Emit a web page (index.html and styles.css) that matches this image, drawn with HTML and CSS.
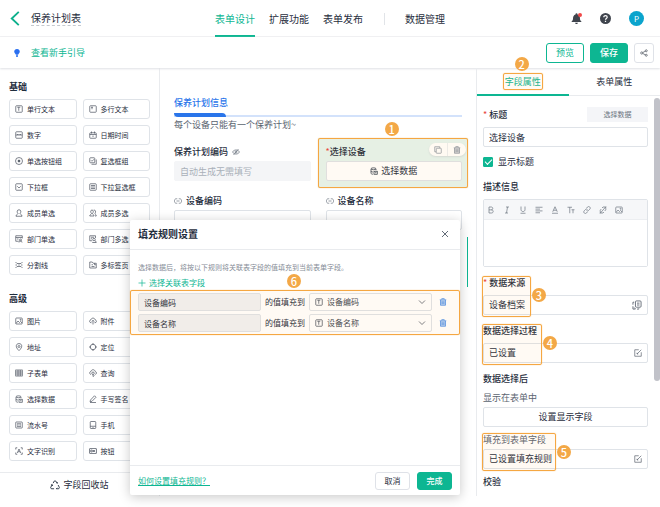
FILE: index.html
```html
<!doctype html>
<html lang="zh-CN">
<head>
<meta charset="utf-8">
<meta name="viewport" content="width=device-width, initial-scale=1">
<title>保养计划表</title>
<link rel="stylesheet" href="styles.css">
</head>
<body>
	<!-- 图标 -->
	<svg class="defs" width="0" height="0">
		<symbol id="i-text" viewBox="0 0 16 16"><rect x="1.5" y="1.5" width="13" height="13" rx="1.5"/><path d="M4.5 4.5h6M7.500 4.500v7"/></symbol>
		<symbol id="i-area" viewBox="0 0 16 16"><rect x="1.5" y="1.5" width="13" height="13" rx="1.5"/><path d="M4 4.500h4M6 4.500v4"/></symbol>
		<symbol id="i-num" viewBox="0 0 16 16"><rect x="1.5" y="1.5" width="13" height="13" rx="1.5"/><path d="M1.500 8h13M5 8v-2M8 8v-2M11 8v-2"/></symbol>
		<symbol id="i-date" viewBox="0 0 16 16"><rect x="1.5" y="3.500" width="13" height="11" rx="1.5"/><path d="M1.500 7h13M5 1v4M11 1v4M8 9v3"/></symbol>
		<symbol id="i-radio" viewBox="0 0 16 16"><circle cx="8" cy="8" r="7"/><circle cx="8" cy="8" r="2" fill="currentColor"/></symbol>
		<symbol id="i-check" viewBox="0 0 16 16"><rect x="1.500" y="1.500" width="10" height="10" rx="1.500"/><path d="M14.500 5v9.500h-9.500M4 6.500l2 2 4-4"/></symbol>
		<symbol id="i-down" viewBox="0 0 16 16"><rect x="1.5" y="1.5" width="13" height="13" rx="1.5"/><path d="M4.500 6.500l3.500 3.500 3.500-3.500"/></symbol>
		<symbol id="i-list" viewBox="0 0 16 16"><rect x="1.5" y="1.5" width="13" height="13" rx="1.5"/><path d="M4 5h8M4 8h8M4 11h8"/></symbol>
		<symbol id="i-user" viewBox="0 0 16 16"><path d="M6 9c-3-3-2-7.500 2-7.500s5 4.500 2 7.500c0 2 4 1 4 5.500h-12c0-4.500 4-3.500 4-5.500z"/></symbol>
		<symbol id="i-users" viewBox="0 0 16 16"><path d="M5 9c-2.500-3-2-7 1-7s3.500 4 1 7c0 2 3 1.500 3 5h-8.500c0-3.500 3.500-3 3.500-5zM9.500 2c4-.5 4.500 4 2.500 7 0 2 2.500 1.500 2.500 5h-2.500"/></symbol>
		<symbol id="i-dept" viewBox="0 0 16 16"><path d="M14.500 7v-5.500h-13v11h6M1.500 5h13M4 8h3"/><circle cx="11" cy="10" r="2"/><path d="M8 15c0-4 6-4 6 0"/></symbol>
		<symbol id="i-depts" viewBox="0 0 16 16"><path d="M13 6v-4.500h-11.500v10h5M4 4.500h6M4 7.500h2"/><circle cx="10" cy="9" r="2.500"/><path d="M6.500 15h8c0-2-1-3-2.500-3.500"/></symbol>
		<symbol id="i-split" viewBox="0 0 16 16"><path d="M1 2l3 3h8l3-3M1 14l3-3h8l3 3M1 8h3M6.500 8h3M12 8h3"/></symbol>
		<symbol id="i-tabs" viewBox="0 0 16 16"><path d="M1.500 2h5l2 2.500h6v9.500h-13zM5 7.500h3M5 11h6M11 4.500v3h3"/></symbol>
		<symbol id="i-img" viewBox="0 0 16 16"><rect x="1.500" y="2" width="13" height="12" rx="1.500"/><path d="M2 13l4-5 3 3 2-2 3 3"/><circle cx="11" cy="5.500" r="1"/></symbol>
		<symbol id="i-up" viewBox="0 0 16 16"><path d="M5 11.500h-1c-4-.5-3.500-5.500-.5-5.500 1-5 8-5 9 0 3.500.5 3 5.500-.5 5.500h-1M8 15v-8M5.500 9l2.500-2.500 2.500 2.500"/></symbol>
		<symbol id="i-pin" viewBox="0 0 16 16"><path d="M8 15.200c-8-7-6.500-14 0-14s8 7 0 14z"/><circle cx="8" cy="7" r="2"/></symbol>
		<symbol id="i-locate" viewBox="0 0 16 16"><circle cx="8" cy="8" r="5.500"/><path d="M8 0v4M8 12v4M0 8h4M12 8h4"/></symbol>
		<symbol id="i-sub" viewBox="0 0 16 16"><rect x="1.500" y="2" width="13" height="12"/><path d="M6 2v12M10.500 2v12M1.500 6h13M1.500 10h13"/></symbol>
		<symbol id="i-find" viewBox="0 0 16 16"><path d="M4 11c-4-1-3-6 0-6 1-5 7.500-4.500 8.500 0 3.500 1 3 5 0 6"/><circle cx="8" cy="8.500" r="2.500"/><path d="M8 11v4M8 15l3-2"/></symbol>
		<symbol id="i-data" viewBox="0 0 16 16"><path d="M2 3.500c0-2.500 10-2.500 10 0s-10 2.500-10 0v9c0 1 2 2 4 2M12 3.500v3M2 8c0 1 2 2 4 2"/><rect x="8" y="8.500" width="6.500" height="6"/><path d="M10 11.500h3"/></symbol>
		<symbol id="i-pen" viewBox="0 0 16 16"><path d="M3 10l8-8.500 3 3-8 8-4 1zM2 15h12"/></symbol>
		<symbol id="i-serial" viewBox="0 0 16 16"><rect x="1.500" y="2" width="13" height="12" rx="1"/><path d="M4 5.500h8M4 8h3M9 8h3M4 10.800h8"/></symbol>
		<symbol id="i-phone" viewBox="0 0 16 16"><rect x="2.500" y="1" width="11" height="14" rx="1.500"/><path d="M2.500 10.500h11M7 13h2"/></symbol>
		<symbol id="i-ocr" viewBox="0 0 16 16"><path d="M1.500 5v-3.500h3M11.500 1.500h3v3.500M14.500 11v3.500h-3M4.500 14.500h-3v-3.500M4.500 12l3.500-8 3.500 8M6 9.500h4"/></symbol>
		<symbol id="i-btn" viewBox="0 0 16 16"><rect x="1" y="3" width="14" height="10" rx="1"/><path d="M3.500 6h3v4h-3zM9 6v4M12.500 6l-3 2 3 2"/></symbol>
		<symbol id="i-recycle" viewBox="0 0 16 16"><path d="M5 5l2-3.500h2l2.500 4M13 8l2 4-1 2h-4M6.500 14h-4.500l-1-2 2.500-4.500M3.500 7.500l-2 .5M3.500 7.500l.8 2M10 14l1.500-1.500M11.500 5.500l.5-2"/></symbol>
		<symbol id="i-bell" viewBox="0 0 16 16"><path fill="currentColor" stroke="none" d="M8 .5c1 0 1.500.5 1.500 1.500 2.500.7 3.500 3 3.500 5 0 3 .5 4 2 5v1h-14v-1c1.500-1 2-2 2-5 0-2 1-4.300 3.500-5 0-1 .5-1.500 1.500-1.500zM6 14h4c0 2.500-4 2.500-4 0z"/></symbol>
		<symbol id="i-help" viewBox="0 0 16 16"><circle cx="8" cy="8" r="8" fill="currentColor" stroke="none"/><path stroke="#fff" stroke-width="1.800" d="M5.500 6.300c0-3.300 5-3.200 5 0 0 1.700-2.500 1.700-2.500 3.600M8 11.300v1.700"/></symbol>
		<symbol id="i-share" viewBox="0 0 16 16"><circle cx="3.500" cy="8" r="2.200"/><circle cx="12.500" cy="3.500" r="2"/><circle cx="12.500" cy="12.500" r="2"/><path d="M5.500 7l5-2.500M5.500 9l5 2.500"/></symbol>
		<symbol id="i-bulb" viewBox="0 0 16 16"><path fill="currentColor" stroke="none" d="M8 0c4 0 6 3 5.500 6-.4 2.500-2.700 3.500-3.200 5.500h-4.600c-.5-2-2.800-3-3.200-5.500-.5-3 1.500-6 5.500-6zM6 12.500h4v2l-1 1.500h-2l-1-1.500z"/></symbol>
		<symbol id="i-back" viewBox="0 0 16 16"><path d="M11.500 1l-7.500 7 7.500 7"/></symbol>
		<symbol id="i-hide" viewBox="0 0 16 16"><path d="M1 8c3-5.500 11-5.500 14 0-3 5.500-11 5.500-14 0zM13 2l-10 12"/><circle cx="8" cy="8" r="2"/></symbol>
		<symbol id="i-link" viewBox="0 0 16 16"><path d="M6.500 12.500h-2c-5 0-5-9 0-9h2M9.500 3.500h2c5 0 5 9 0 9h-2M5 8h6"/></symbol>
		<symbol id="i-copy" viewBox="0 0 16 16"><rect x="4.500" y="4.500" width="10" height="10" rx="1"/><path d="M11.500 4v-2.500h-10v10h2.500"/></symbol>
		<symbol id="i-trash" viewBox="0 0 16 16"><path d="M1.500 3.500h13M5.500 3v-1.800h5v1.800"/><path fill="currentColor" fill-opacity=".4" d="M3 4v10.500h10v-10.500"/><path d="M6.300 6.500v5.500M9.700 6.500v5.500"/></symbol>
		<symbol id="i-close" viewBox="0 0 16 16"><path d="M2 2l12 12M14 2l-12 12"/></symbol>
		<symbol id="i-plus" viewBox="0 0 16 16"><path d="M8 1v14M1 8h14"/></symbol>
		<symbol id="i-chev" viewBox="0 0 16 16"><path d="M2 5l6 6 6-6"/></symbol>
		<symbol id="i-edit" viewBox="0 0 16 16"><path d="M9.500 1.500h-8v13h13v-8M6 10l8.500-8.500M6 7.500v2.500h2.500"/></symbol>
		<symbol id="i-switch" viewBox="0 0 16 16"><rect x="5.500" y="1.500" width="9" height="10" rx="1.500"/><path d="M8 5h4M8 8h4M3.500 3.500h-2v4M1.500 10v4.500h4M8 14.500h3v-1M3.500 12l2 2.300"/></symbol>
		<symbol id="i-bold" viewBox="0 0 16 16"><path d="M4 2v12h5c4.500 0 4.500-6.300 0-6.300h-5M4 2h4.500c4 0 4 5.700 0 5.700"/></symbol>
		<symbol id="i-italic" viewBox="0 0 16 16"><path d="M6 2h6M4 14h6M9 2l-2 12"/></symbol>
		<symbol id="i-under" viewBox="0 0 16 16"><path d="M4 1v6c0 5.500 8 5.500 8 0v-6M3 14.500h10"/></symbol>
		<symbol id="i-align" viewBox="0 0 16 16"><path d="M1 2.500h14M1 6.200h9M1 9.800h14M1 13.500h9"/></symbol>
		<symbol id="i-color" viewBox="0 0 16 16"><path d="M3.500 11.500l4.500-10 4.500 10M5 8.500h6M2 14.500h12"/></symbol>
		<symbol id="i-size" viewBox="0 0 16 16"><path d="M1 2.500h9M5.500 2.500v12M9 7.500h6M12 7.500v7"/></symbol>
		<symbol id="i-chain" viewBox="0 0 16 16"><path d="M7 4.500l2-2.500c3-3 7.500 1.500 4.500 4.500l-2.500 2.500c-1.500 1.300-3 1-4 0M9 11.500l-2 2.500c-3 3-7.500-1.500-4.500-4.500l2.500-2.500c1.500-1.300 3-1 4 0"/></symbol>
		<symbol id="i-unlink" viewBox="0 0 16 16"><path d="M6 4l2-2h5.500v5.500l-2 2.500M10 12l-2 2h-5.500v-5.500l2-2.500M14 1l-12 14"/></symbol>
	</svg>

	<div class="app">
		<header class="header">
			<div class="header-left">
				<button type="button" class="bare back" aria-label="返回"><svg class="icon icon-lg"><use href="#i-back"/></svg></button>
				<h1 class="form-name">保养计划表</h1>
			</div>
			<nav class="nav">
				<a href="#" class="active">表单设计</a>
				<a href="#">扩展功能</a>
				<a href="#">表单发布</a>
				<a href="#" class="nav-data">数据管理</a>
			</nav>
			<div class="header-right">
				<button type="button" class="bare bell" aria-label="消息"><svg class="icon icon-md"><use href="#i-bell"/></svg></button>
				<button type="button" class="bare" aria-label="帮助"><svg class="icon icon-md"><use href="#i-help"/></svg></button>
				<span class="avatar">P</span>
			</div>
		</header>

		<div class="toolbar">
			<svg class="icon bulb"><use href="#i-bulb"/></svg>
			<a href="#" class="guide">查看新手引导</a>
			<button type="button" class="btn btn-line">预览</button>
			<button type="button" class="btn btn-main">保存</button>
			<button type="button" class="btn btn-share" aria-label="分享"><svg class="icon"><use href="#i-share"/></svg></button>
		</div>

		<main class="workspace">
			<aside class="sidebar">
				<h2>基础</h2>
				<div class="widgets">
					<button type="button"><svg class="icon"><use href="#i-text"/></svg>单行文本</button>
					<button type="button"><svg class="icon"><use href="#i-area"/></svg>多行文本</button>
					<button type="button"><svg class="icon"><use href="#i-num"/></svg>数字</button>
					<button type="button"><svg class="icon"><use href="#i-date"/></svg>日期时间</button>
					<button type="button"><svg class="icon"><use href="#i-radio"/></svg>单选按钮组</button>
					<button type="button"><svg class="icon"><use href="#i-check"/></svg>复选框组</button>
					<button type="button"><svg class="icon"><use href="#i-down"/></svg>下拉框</button>
					<button type="button"><svg class="icon"><use href="#i-list"/></svg>下拉复选框</button>
					<button type="button"><svg class="icon"><use href="#i-user"/></svg>成员单选</button>
					<button type="button"><svg class="icon"><use href="#i-users"/></svg>成员多选</button>
					<button type="button"><svg class="icon"><use href="#i-dept"/></svg>部门单选</button>
					<button type="button"><svg class="icon"><use href="#i-depts"/></svg>部门多选</button>
					<button type="button"><svg class="icon"><use href="#i-split"/></svg>分割线</button>
					<button type="button"><svg class="icon"><use href="#i-tabs"/></svg>多标签页</button>
				</div>
				<h2>高级</h2>
				<div class="widgets">
					<button type="button"><svg class="icon"><use href="#i-img"/></svg>图片</button>
					<button type="button"><svg class="icon"><use href="#i-up"/></svg>附件</button>
					<button type="button"><svg class="icon"><use href="#i-pin"/></svg>地址</button>
					<button type="button"><svg class="icon"><use href="#i-locate"/></svg>定位</button>
					<button type="button"><svg class="icon"><use href="#i-sub"/></svg>子表单</button>
					<button type="button"><svg class="icon"><use href="#i-find"/></svg>查询</button>
					<button type="button"><svg class="icon"><use href="#i-data"/></svg>选择数据</button>
					<button type="button"><svg class="icon"><use href="#i-pen"/></svg>手写签名</button>
					<button type="button"><svg class="icon"><use href="#i-serial"/></svg>流水号</button>
					<button type="button"><svg class="icon"><use href="#i-phone"/></svg>手机</button>
					<button type="button"><svg class="icon"><use href="#i-ocr"/></svg>文字识别</button>
					<button type="button"><svg class="icon"><use href="#i-btn"/></svg>按钮</button>
				</div>
				<button type="button" class="recycle"><svg class="icon icon-md"><use href="#i-recycle"/></svg>字段回收站</button>
			</aside>

			<section class="canvas">
				<h3 class="part-title">保养计划信息</h3>
				<div class="part-line"></div>
				<p class="part-desc">每个设备只能有一个保养计划~</p>
				<div class="fields">
					<div class="field">
						<label for="code">保养计划编码 <svg class="icon"><use href="#i-hide"/></svg></label>
						<input type="text" id="code" class="box off" placeholder="自动生成无需填写" disabled>
					</div>
					<div class="field picked">
						<span class="field-name"><i class="star">*</i>选择设备</span>
						<button type="button" class="box pick"><svg class="icon"><use href="#i-data"/></svg>选择数据</button>
						<div class="mark mark-field"><b class="dot dot-top">1</b></div>
						<div class="tools">
							<button type="button" class="bare" aria-label="复制"><svg class="icon"><use href="#i-copy"/></svg></button>
							<button type="button" class="bare" aria-label="删除"><svg class="icon"><use href="#i-trash"/></svg></button>
						</div>
					</div>
					<div class="field">
						<label for="dev-code"><svg class="icon"><use href="#i-link"/></svg> 设备编码</label>
						<input type="text" id="dev-code" class="box">
					</div>
					<div class="field">
						<label for="dev-name"><svg class="icon"><use href="#i-link"/></svg> 设备名称</label>
						<input type="text" id="dev-name" class="box">
					</div>
				</div>
				<div class="drop-line"></div>
			</section>

			<aside class="props">
				<div class="tabs">
					<button type="button" class="active"><span class="tab-name">字段属性<span class="mark mark-tab"><b class="dot dot-top">2</b></span></span></button>
					<button type="button">表单属性</button>
				</div>
				<div class="props-body">
					<div class="title-row">
						<label for="title"><i class="star">*</i> 标题</label>
						<span class="type">选择数据</span>
					</div>
					<input type="text" id="title" class="box" value="选择设备">
					<label class="check"><input type="checkbox" checked>显示标题</label>

					<div class="group">
						<h4>描述信息</h4>
						<div class="editor">
							<div class="editor-bar">
								<button type="button" class="bare" aria-label="加粗"><svg class="icon"><use href="#i-bold"/></svg></button>
								<button type="button" class="bare" aria-label="斜体"><svg class="icon"><use href="#i-italic"/></svg></button>
								<button type="button" class="bare" aria-label="下划线"><svg class="icon"><use href="#i-under"/></svg></button>
								<button type="button" class="bare" aria-label="对齐"><svg class="icon"><use href="#i-align"/></svg></button>
								<button type="button" class="bare" aria-label="颜色"><svg class="icon"><use href="#i-color"/></svg></button>
								<button type="button" class="bare" aria-label="字号"><svg class="icon"><use href="#i-size"/></svg></button>
								<button type="button" class="bare" aria-label="链接"><svg class="icon"><use href="#i-chain"/></svg></button>
								<button type="button" class="bare" aria-label="取消链接"><svg class="icon"><use href="#i-unlink"/></svg></button>
								<button type="button" class="bare" aria-label="插入图片"><svg class="icon"><use href="#i-img"/></svg></button>
							</div>
							<textarea aria-label="描述信息"></textarea>
						</div>
					</div>

					<div class="group">
						<h4><i class="star">*</i> 数据来源</h4>
						<button type="button" class="box setting">设备档案<svg class="icon icon-md"><use href="#i-switch"/></svg></button>
						<div class="mark mark-source"><b class="dot dot-side">3</b></div>
					</div>

					<div class="group">
						<h4>数据选择过程</h4>
						<button type="button" class="box setting">已设置<svg class="icon"><use href="#i-edit"/></svg></button>
						<div class="mark mark-process"><b class="dot dot-side">4</b></div>
					</div>

					<div class="group">
						<h4>数据选择后</h4>
						<p class="sub">显示在表单中</p>
						<button type="button" class="box">设置显示字段</button>
					</div>
					<div class="group tight">
						<p class="sub">填充到表单字段</p>
						<button type="button" class="box setting">已设置填充规则<svg class="icon"><use href="#i-edit"/></svg></button>
						<div class="mark mark-fill"><b class="dot dot-side">5</b></div>
					</div>
					<div class="group tight">
						<h4>校验</h4>
					</div>
				</div>
				<div class="scroll"></div>
			</aside>
		</main>

		<div class="dialog" role="dialog" aria-labelledby="dialog-title">
			<div class="dialog-head">
				<h2 id="dialog-title">填充规则设置</h2>
				<button type="button" class="bare" aria-label="关闭"><svg class="icon"><use href="#i-close"/></svg></button>
			</div>
			<div class="dialog-body">
				<p class="hint">选择数据后，将按以下规则将关联表字段的值填充到当前表单字段。</p>
				<button type="button" class="bare add"><svg class="icon"><use href="#i-plus"/></svg>选择关联表字段</button>
				<div class="rules">
					<div class="rule">
						<input type="text" id="from1" value="设备编码" readonly>
						<label for="from1">的值填充到</label>
						<div class="select">
							<svg class="icon"><use href="#i-text"/></svg>
							<select aria-label="目标字段"><option>设备编码</option></select>
							<svg class="icon"><use href="#i-chev"/></svg>
						</div>
						<button type="button" class="bare del" aria-label="删除"><svg class="icon"><use href="#i-trash"/></svg></button>
					</div>
					<div class="rule">
						<input type="text" id="from2" value="设备名称" readonly>
						<label for="from2">的值填充到</label>
						<div class="select">
							<svg class="icon"><use href="#i-text"/></svg>
							<select aria-label="目标字段"><option>设备名称</option></select>
							<svg class="icon"><use href="#i-chev"/></svg>
						</div>
						<button type="button" class="bare del" aria-label="删除"><svg class="icon"><use href="#i-trash"/></svg></button>
					</div>
					<div class="mark mark-rules"><b class="dot dot-top">6</b></div>
				</div>
			</div>
			<div class="dialog-foot">
				<a href="#">如何设置填充规则？</a>
				<button type="button" class="btn">取消</button>
				<button type="button" class="btn btn-main">完成</button>
			</div>
		</div>
	</div>
</body>
</html>
```

FILE: styles.css
```css
* {
	box-sizing: border-box;
}
body {
	margin: 0;
	background: #fff;
	color: #1f2d3d;
	font: 9px/14px "Noto Sans CJK SC", sans-serif;
}
h1, h2, h3, h4, p {
	margin: 0;
	font-size: 9px;
}
p {
	font-weight: 400;
}
button, input, select, textarea {
	margin: 0;
	padding: 0;
	font: inherit;
	color: inherit;
	outline: none;
}
a {
	color: inherit;
	text-decoration: none;
}
.defs {
	position: absolute;
}
.icon {
	width: 8px;
	height: 8px;
	flex: none;
	fill: none;
	stroke: currentColor;
	stroke-width: 1.4;
}
.icon-md {
	width: 10px;
	height: 10px;
}
.icon-lg {
	width: 15px;
	height: 15px;
	stroke-width: 2;
}
.bare {
	display: flex;
	align-items: center;
	justify-content: center;
	border: none;
	background: none;
}
.star {
	color: #e8443a;
	font-style: normal;
	font-weight: 400;
}
.app {
	position: relative;
	display: flex;
	flex-direction: column;
	min-height: 100vh;
	padding-bottom: 11px;
}

/* 顶部 */
.header {
	display: grid;
	grid-template-columns: 1fr auto 1fr;
	height: 37px;
	border-bottom: 1px solid #f1f2f4;
	font-size: 10px;
}
.header-left {
	display: flex;
	align-items: center;
	gap: 8px;
	padding-left: 8px;
}
.back {
	color: #0db08c;
}
.form-name {
	font-size: 10px;
	font-weight: 400;
	border-bottom: 1px dashed #c5c9cf;
}
.nav {
	display: flex;
	gap: 14px;
	line-height: 37px;
}
.nav a {
	height: 37px;
}
.nav .active {
	color: #0db692;
	border-bottom: 2px solid #0db692;
}
.nav .nav-data {
	display: flex;
	align-items: center;
	margin-left: 7px;
}
.nav-data::before {
	content: "";
	width: 1px;
	height: 12px;
	margin-right: 20px;
	background: #e1e4e8;
}
.header-right {
	display: flex;
	align-items: center;
	justify-content: flex-end;
	gap: 18px;
	padding-right: 16px;
	color: #3f444d;
}
.header-right .icon {
	width: 11px;
	height: 11px;
}
.bell {
	position: relative;
}
.bell::after {
	content: "";
	position: absolute;
	top: 0;
	right: 0;
	width: 4px;
	height: 4px;
	border-radius: 50%;
	background: #f04848;
}
.avatar {
	width: 15px;
	height: 15px;
	border-radius: 50%;
	background: #0ba4cd;
	color: #fff;
	font-size: 8px;
	line-height: 15px;
	text-align: center;
}
.toolbar {
	position: relative;
	display: flex;
	align-items: center;
	gap: 6px;
	height: 31px;
	padding: 0 6px 0 13px;
	box-shadow: 0 1px 2px #dfe1e5;
}
.bulb {
	color: #2a6ff0;
}
.guide {
	flex: 1;
	margin-left: 4px;
	color: #0db692;
}
.btn {
	width: 38px;
	height: 20px;
	border: 1px solid #dfe2e8;
	border-radius: 3px;
	background: #fff;
}
.btn-line {
	border-color: #0db692;
	color: #0db692;
}
.btn-main {
	border-color: #0db692;
	background: #0db692;
	color: #fff;
	font-weight: 500;
}
.btn-share {
	display: flex;
	align-items: center;
	justify-content: center;
	width: 20px;
	color: #4a515c;
}
.workspace {
	display: grid;
	grid-template-columns: 160px 1fr 184px;
	flex: 1;
	border-radius: 0 0 4px 4px;
}

/* 左侧控件 */
.sidebar {
	display: flex;
	flex-direction: column;
	border-right: 1px solid #e9ebee;
}
.sidebar h2 {
	margin: 12px 9px 5px;
}
.sidebar .widgets + h2 {
	margin-top: 17px;
}
.widgets {
	display: grid;
	grid-template-columns: 1fr 1fr;
	gap: 6px;
	padding: 0 9px;
}
.widgets button {
	display: flex;
	align-items: center;
	gap: 4px;
	height: 20px;
	padding-left: 5px;
	border: 1px solid #dfe3e8;
	border-radius: 3px;
	background: #fff;
	font-size: 7px;
	white-space: nowrap;
}
.widgets .icon {
	color: #4a525e;
}
.recycle {
	display: flex;
	align-items: center;
	justify-content: center;
	gap: 3px;
	height: 24px;
	margin-top: auto;
	border: none;
	border-top: 1px solid #e9ebee;
	background: none;
}

/* 中间画布 */
.canvas {
	position: relative;
	padding: 28px 14px 0;
}
.part-title {
	color: #2a75ea;
	font-weight: 500;
}
.part-line {
	height: 4px;
	margin: 3px 0 1px;
	background: linear-gradient(transparent 50%, #d3e2fb 50%);
}
.part-line::before {
	content: "";
	display: block;
	width: 52px;
	height: 4px;
	border-radius: 0 4px 0 4px;
	background: #2a75ea;
}
.part-desc {
	color: #5b6470;
}
.fields {
	display: grid;
	grid-template-columns: 1fr 1fr;
	gap: 13px 15px;
	margin-top: 13px;
}
.field {
	position: relative;
	display: flex;
	flex-direction: column;
	gap: 2px;
}
.field label,
.field-name {
	display: flex;
	align-items: center;
	gap: 4px;
	font-weight: 500;
}
.field label .icon {
	color: #6b7480;
}
.box {
	display: block;
	width: 100%;
	height: 20px;
	padding: 0 5px;
	border: 1px solid #dfe3e8;
	border-radius: 2px;
	background: #fff;
}
.off {
	border-color: #f4f5f7;
	background: #f4f5f7;
}
.off::placeholder {
	color: #a9b0b9;
}
.picked {
	z-index: 0;
}
.picked::before {
	content: "";
	position: absolute;
	z-index: -1;
	inset: -7px -6px -7px -8px;
	background: #e5f5ef;
}
.field-name {
	gap: 0;
}
.pick {
	display: flex;
	align-items: center;
	justify-content: center;
	gap: 3px;
}
.tools {
	position: absolute;
	top: -2px;
	right: -4px;
	display: flex;
	width: 37px;
	height: 13px;
	border-radius: 7px;
	background: #fffaf2;
	box-shadow: 0 1px 2px #d5d9d3;
	color: #8b8f95;
}
.tools button {
	flex: 1;
}
.tools button + button {
	border-left: 1px solid #eceae5;
}
.drop-line {
	position: absolute;
	top: 169px;
	right: 8px;
	width: 1px;
	height: 50px;
	background: #0db692;
}

/* 右侧属性 */
.props {
	position: relative;
	border-left: 1px solid #e9ebee;
}
.tabs {
	display: flex;
	border-bottom: 1px solid #e9ebee;
}
.tabs button {
	flex: 1;
	height: 27px;
	padding-top: 2px;
	border: none;
	border-bottom: 1px solid transparent;
	background: none;
}
.tabs .active {
	border-bottom-color: #0db692;
	box-shadow: 0 1px #0db692;
	color: #0db692;
}
.tab-name {
	position: relative;
}
.props-body {
	padding: 11px 12px 0 6px;
}
.title-row {
	display: flex;
	align-items: center;
	justify-content: space-between;
	margin-bottom: 5px;
	font-weight: 500;
}
.type {
	width: 61px;
	background: #f4f5f8;
	color: #6b7480;
	font-size: 7px;
	font-weight: 400;
	line-height: 15px;
	text-align: center;
}
.check {
	display: flex;
	align-items: center;
	gap: 5px;
	margin: 8px 0 11px;
}
.check input {
	display: flex;
	align-items: center;
	justify-content: center;
	width: 10px;
	height: 10px;
	border: 1px solid #dfe3e8;
	border-radius: 1px;
	appearance: none;
}
.check input:checked {
	border-color: #0db692;
	background: #0db692;
}
.check input:checked::after {
	content: "";
	width: 6px;
	height: 3px;
	margin-bottom: 2px;
	border: solid #fff;
	border-width: 0 0 1px 1px;
	transform: rotate(-45deg);
}
.group {
	position: relative;
	margin-top: 9px;
}
.tight {
	margin-top: 6px;
}
.group h4 {
	margin-bottom: 5px;
	font-weight: 500;
}
.sub {
	margin-bottom: 2px;
	color: #5b6470;
}
.setting {
	display: flex;
	align-items: center;
	justify-content: space-between;
}
.setting .icon {
	color: #5b6470;
}
.editor {
	border: 1px solid #dfe3e8;
	border-radius: 2px;
}
.editor-bar {
	display: flex;
	gap: 8px;
	height: 20px;
	padding: 0 3px;
	border-bottom: 1px solid #eceef1;
	background: #f6f7f9;
	color: #6b7480;
}
.editor textarea {
	display: block;
	width: 100%;
	height: 46px;
	border: none;
	resize: none;
}
.scroll {
	position: absolute;
	top: 30px;
	right: 0;
	width: 6px;
	height: 283px;
	border-radius: 3px;
	background: #c1c2c9;
}

/* 步骤标注 */
.mark {
	position: absolute;
	border: 1px solid #f5a742;
	border-radius: 2px;
	box-shadow: 0 0 1px #f5a742;
	background: rgba(250, 170, 60, .06);
	pointer-events: none;
}
.dot {
	position: absolute;
	width: 14px;
	height: 14px;
	border-radius: 50%;
	background: #f3a847;
	color: #fff;
	font-size: 11px;
	font-weight: 500;
	line-height: 14px;
	text-align: center;
}
.dot-top {
	bottom: calc(100% + 3px);
	left: calc(50% - 8px);
}
.dot-side {
	top: 11px;
	left: calc(100% + 2px);
}
.mark-field {
	inset: -7px -6px -7px -8px;
}
.mark-tab {
	inset: -2px;
}
.mark-source,
.mark-process,
.mark-fill {
	top: 0;
	bottom: -2px;
	left: -1px;
	width: 49px;
}
.mark-process {
	width: 60px;
}
.mark-fill {
	width: 74px;
}

/* 弹窗 */
.dialog {
	position: absolute;
	top: 220px;
	left: 130px;
	width: 50%;
	border-radius: 2px;
	background: #fff;
	box-shadow: 0 2px 12px rgba(0, 0, 0, .22);
	font-size: 8px;
}
.dialog-head {
	display: flex;
	align-items: center;
	justify-content: space-between;
	height: 30px;
	padding: 0 11px 2px 8px;
	border-bottom: 1px solid #e9ebee;
}
.dialog-head h2 {
	font-size: 10px;
}
.dialog-body {
	min-height: 215px;
	padding-top: 10px;
}
.hint {
	padding-left: 8px;
	color: #868d97;
	font-size: 7px;
}
.add {
	gap: 3px;
	margin: 2px 0 0 8px;
	color: #0db692;
}
.rules {
	position: relative;
	display: grid;
	gap: 3px;
	padding: 3px 8px;
}
.rule {
	display: flex;
	align-items: center;
	gap: 4px;
}
.rule input,
.select {
	flex: 1;
	min-width: 0;
	height: 18px;
	padding: 0 5px;
	border: 1px solid #dfe3e8;
	border-radius: 2px;
}
.rule input {
	background: #f1f2f4;
}
.select {
	display: flex;
	align-items: center;
	gap: 4px;
	color: #3f4854;
}
.select select {
	flex: 1;
	height: 16px;
	border: none;
	background: none;
	appearance: none;
}
.del {
	width: 16px;
	padding-right: 3px;
	color: #3f86e6;
}
.mark-rules {
	inset: 0;
}
.dialog-foot {
	display: flex;
	align-items: center;
	gap: 7px;
	padding: 6px 8px 5px;
	border-top: 1px solid #e9ebee;
}
.dialog-foot a {
	margin-right: auto;
	color: #0db692;
	text-decoration: underline;
}
.dialog-foot .btn {
	width: 35px;
	height: 18px;
}
```
